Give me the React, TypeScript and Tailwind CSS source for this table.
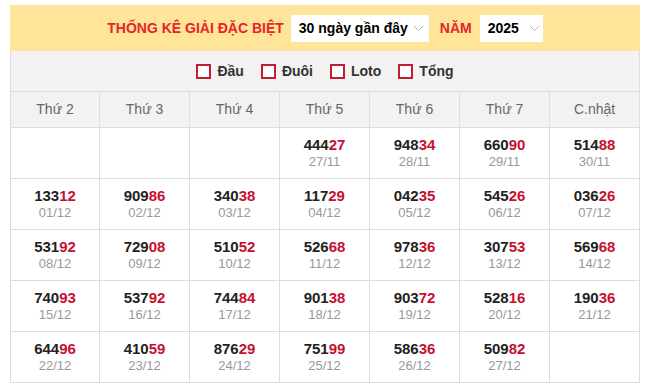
import React from "react";

const heads = ["Thứ 2", "Thứ 3", "Thứ 4", "Thứ 5", "Thứ 6", "Thứ 7", "C.nhật"];

type Cell = { n: string; d: string } | null;

const rows: Cell[][] = [
  [null, null, null, { n: "44427", d: "27/11" }, { n: "94834", d: "28/11" }, { n: "66090", d: "29/11" }, { n: "51488", d: "30/11" }],
  [{ n: "13312", d: "01/12" }, { n: "90986", d: "02/12" }, { n: "34038", d: "03/12" }, { n: "11729", d: "04/12" }, { n: "04235", d: "05/12" }, { n: "54526", d: "06/12" }, { n: "03626", d: "07/12" }],
  [{ n: "53192", d: "08/12" }, { n: "72908", d: "09/12" }, { n: "51052", d: "10/12" }, { n: "52668", d: "11/12" }, { n: "97836", d: "12/12" }, { n: "30753", d: "13/12" }, { n: "56968", d: "14/12" }],
  [{ n: "74093", d: "15/12" }, { n: "53792", d: "16/12" }, { n: "74484", d: "17/12" }, { n: "90138", d: "18/12" }, { n: "90372", d: "19/12" }, { n: "52816", d: "20/12" }, { n: "19036", d: "21/12" }],
  [{ n: "64496", d: "22/12" }, { n: "41059", d: "23/12" }, { n: "87629", d: "24/12" }, { n: "75199", d: "25/12" }, { n: "58636", d: "26/12" }, { n: "50982", d: "27/12" }, null],
];

function Chevron() {
  return (
    <svg width="11" height="7" viewBox="0 0 11 7" className="ml-[5px]">
      <path d="M1 1l4.5 4.5L10 1" fill="none" stroke="#b5b5b5" strokeWidth="1" />
    </svg>
  );
}

function Check({ label }: { label: string }) {
  return (
    <div className="flex items-center gap-[6px]">
      <div className="w-[15px] h-[15px] border-2 border-[#c0202d] bg-white" />
      <span className="text-[14px] font-bold text-[#333]">{label}</span>
    </div>
  );
}

export default function App() {
  return (
    <div className="bg-white w-[649px] h-[389px] pt-[5px] pl-[10px]" style={{ fontFamily: '"Liberation Sans", Arial, sans-serif' }}>
      <div className="w-[630px]">
        <div className="h-[46px] bg-[#ffe599] flex items-center justify-center">
          <span className="text-[14px] font-bold text-[#e8232b] mr-[7px]">THỐNG KÊ GIẢI ĐẶC BIỆT</span>
          <div className="h-[27px] w-[138px] bg-white flex items-center pl-[8px]">
            <span className="text-[14px] font-bold text-black">30 ngày gần đây</span>
            <Chevron />
          </div>
          <span className="text-[14px] font-bold text-[#e8232b] ml-[11px] mr-[8px]">NĂM</span>
          <div className="h-[27px] w-[63px] bg-white flex items-center pl-[8px]">
            <span className="text-[14px] font-bold text-black">2025</span>
            <span className="ml-[5px]"><Chevron /></span>
          </div>
        </div>
        <div className="h-[41px] bg-[#f2f2f2] border-x border-b border-[#ddd] flex items-center justify-center gap-[17px]">
          <Check label="Đầu" />
          <Check label="Đuôi" />
          <Check label="Loto" />
          <Check label="Tổng" />
        </div>
        <div className="grid grid-cols-[89px_repeat(6,90px)] border-l border-[#ddd]">
          {heads.map((h) => (
            <div key={h} className="h-[36px] bg-[#f2f2f2] border-r border-b border-[#ddd] flex items-center justify-center text-[14px] text-[#666]">
              {h}
            </div>
          ))}
          {rows.flat().map((c, i) => (
            <div key={i} className="h-[51px] border-r border-b border-[#ddd] flex flex-col items-center justify-center">
              {c && (
                <>
                  <div className="text-[15px] font-bold leading-[18px] text-[#222]">
                    {c.n.slice(0, 3)}
                    <span className="text-[#c8102e]">{c.n.slice(3)}</span>
                  </div>
                  <div className="text-[13px] leading-[16px] text-[#999]">{c.d}</div>
                </>
              )}
            </div>
          ))}
        </div>
      </div>
    </div>
  );
}
